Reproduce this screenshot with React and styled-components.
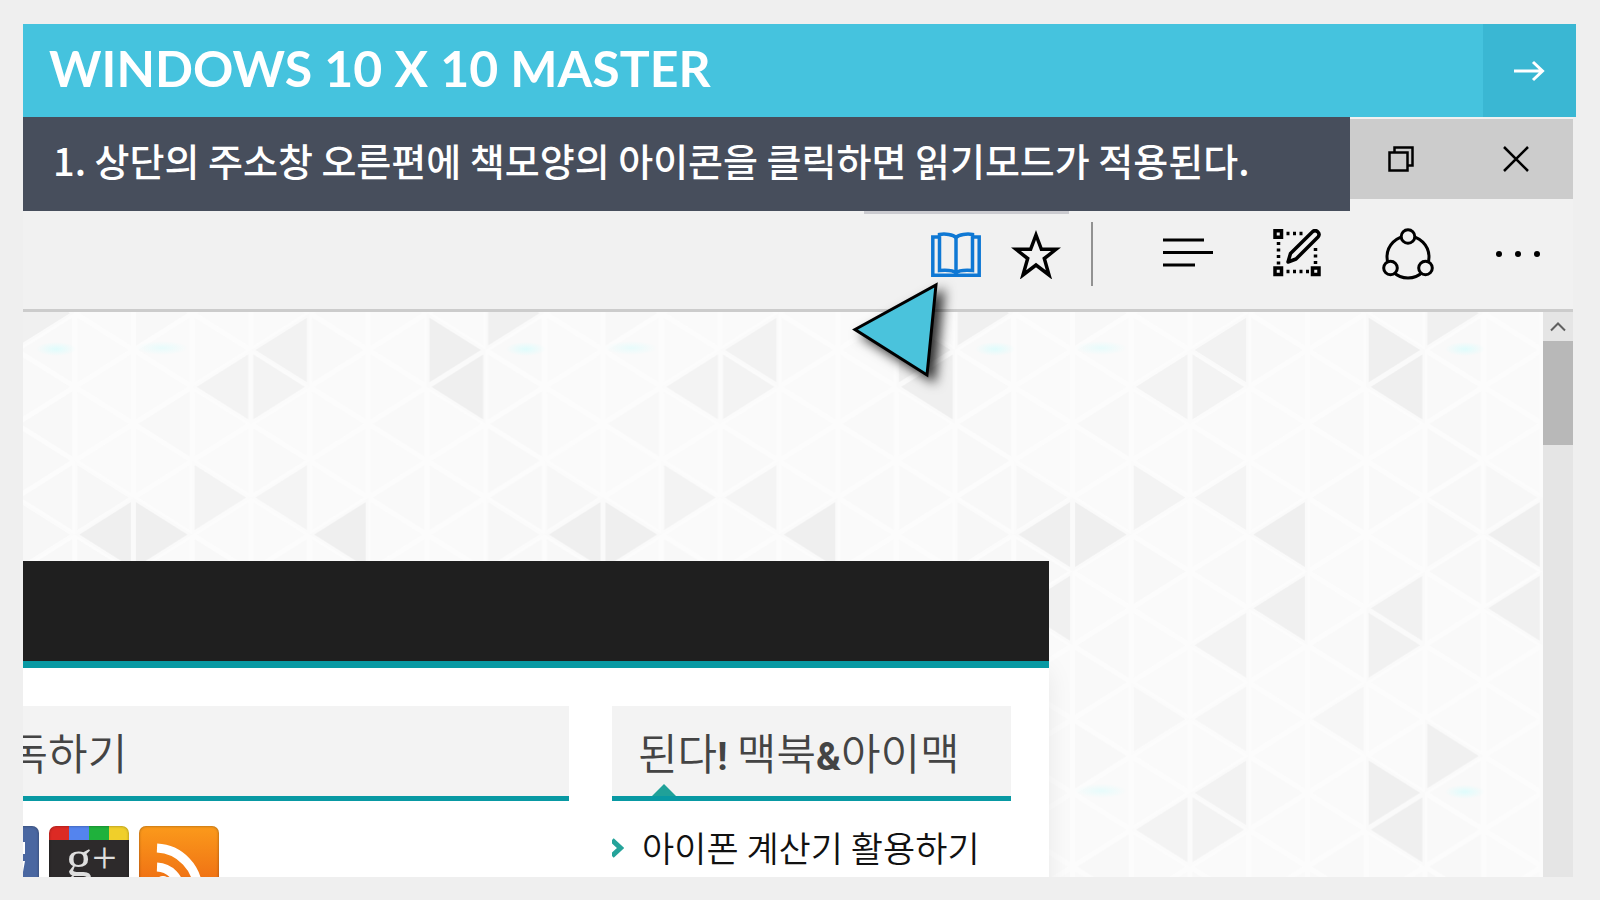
import React from "react";
import styled, { createGlobalStyle } from "styled-components";

const cyan = "#45c3de";
const cyanDark = "#3ab7d3";
const slate = "#474e5c";
const teal = "#0899a3";
const chrome = "#f1f1f1";
const silver = "#cccccc";
const black = "#000000";
const korean = `"Noto Sans CJK KR", sans-serif`;

// background tile: 8 strips wide, 12 half rows tall
const STRIP = 58.7;
const HALF = 36.9;
const TILE_W = STRIP * 8;
const TILE_H = HALF * 12;

// [strip, half row of the tip, direction of the tip, fill]
const shades = [
  [4, 0, "l", "#f2f2f2"],
  [3, 1, "l", "#f3f3f3"],
  [4, 1, "r", "#f3f3f3"],
  [7, 0, "r", "#efefef"],
  [7, 1, "l", "#efefef"],
  [0, 11, "r", "#f0f0f0"],
  [3, 4, "r", "#f3f3f3"],
  [4, 4, "l", "#f4f4f4"],
  [5, 5, "l", "#efefef"],
  [1, 5, "l", "#efefef"],
  [2, 5, "r", "#efefef"],
  [1, 7, "l", "#f0f0f0"],
  [5, 7, "l", "#f0f0f0"],
  [7, 7, "l", "#f1f1f1"],
  [7, 8, "r", "#f1f1f1"],
  [4, 8, "l", "#f3f3f3"],
  [3, 10, "r", "#f7f7f7"],
  [4, 10, "l", "#f6f6f6"],
  [6, 10, "l", "#f6f6f6"],
  [2, 11, "r", "#f8f8f8"],
  [0, 2, "l", "#f8f8f8"],
  [2, 2, "l", "#f8f8f8"],
  [0, 3, "r", "#f8f8f8"],
  [1, 4, "r", "#f7f7f7"],
  [6, 2, "l", "#f9f9f9"],
  [4, 3, "r", "#f9f9f9"],
  [6, 4, "l", "#f9f9f9"],
  [7, 4, "r", "#f9f9f9"],
  [0, 5, "r", "#f7f7f7"],
  [0, 4, "l", "#f8f8f8"],
  [3, 6, "r", "#f8f8f8"],
  [4, 6, "l", "#f9f9f9"],
  [0, 6, "l", "#f8f8f8"],
  [1, 6, "r", "#f8f8f8"],
  [6, 8, "l", "#f9f9f9"],
  [2, 8, "l", "#f9f9f9"],
  [0, 8, "l", "#f9f9f9"],
  [2, 9, "r", "#f9f9f9"],
  [5, 0, "r", "#f9f9f9"],
  [0, 0, "l", "#f9f9f9"],
  [0, 1, "r", "#f9f9f9"],
];

const trianglePoints = (strip, row, tip) => {
  const left = strip * STRIP;
  const right = left + STRIP;
  const y = row * HALF;
  const [tipX, baseX] = tip === "l" ? [left, right] : [right, left];
  return `${tipX},${y} ${baseX},${y - HALF} ${baseX},${y + HALF}`;
};

const gridLines = () => {
  const lines = [];
  for (let c = 0; c <= 8; c++) {
    lines.push(`M${c * STRIP} 0V${TILE_H}`);
  }
  for (let c = 0; c < 8; c++) {
    const x = c * STRIP;
    for (let r = -2; r <= 14; r += 2) {
      const y = (r + (c % 2)) * HALF;
      lines.push(`M${x} ${y}L${x + STRIP} ${y - HALF}`);
      lines.push(`M${x} ${y}L${x + STRIP} ${y + HALF}`);
    }
  }
  return lines.join("");
};

const Backdrop = () => (
  <BackdropSvg aria-hidden="true">
    <defs>
      <radialGradient id="glow">
        <stop offset="0" stopColor="#dffcfc" />
        <stop offset="1" stopColor="#dffcfc" stopOpacity="0" />
      </radialGradient>
      <pattern
        id="triangles"
        x="-7"
        y="38"
        width={TILE_W}
        height={TILE_H}
        patternUnits="userSpaceOnUse"
      >
        <rect width={TILE_W} height={TILE_H} fill="#fafafa" />
        {[0, -12, 12].map((shift) =>
          shades.map(([strip, row, tip, fill]) => (
            <polygon
              key={`${shift}-${strip}-${row}-${tip}`}
              points={trianglePoints(strip, row + shift, tip)}
              fill={fill}
            />
          ))
        )}
        <path d={gridLines()} stroke="#fdfdfd" strokeWidth="5" strokeOpacity="0.8" fill="none" />
        <ellipse cx="40" cy={TILE_H - 1} rx="20" ry="7" fill="url(#glow)" />
        <ellipse cx="40" cy="-1" rx="20" ry="7" fill="url(#glow)" />
        <ellipse cx="146" cy={TILE_H - 2} rx="26" ry="7" fill="url(#glow)" opacity="0.7" />
        <ellipse cx="146" cy="-2" rx="26" ry="7" fill="url(#glow)" opacity="0.7" />
      </pattern>
    </defs>
    <rect width="100%" height="100%" fill="url(#triangles)" />
  </BackdropSvg>
);

const ArrowIcon = () => (
  <svg width="32" height="24" viewBox="0 0 32 24" fill="none" stroke="#fff" strokeWidth="3">
    <path d="M0 12H28M19 3L28.500 12L19 21" />
  </svg>
);

const RestoreIcon = () => (
  <svg width="26" height="26" viewBox="0 0 26 26" fill="none" stroke={black} strokeWidth="2.500">
    <path d="M1.500 6.500H19.500V24.500H1.500ZM6.500 6V1.500H24.500V19.500H20" />
  </svg>
);

const CloseIcon = () => (
  <svg width="26" height="26" viewBox="0 0 26 26" fill="none" stroke={black} strokeWidth="2.500">
    <path d="M1 1L25 25M25 1L1 25" />
  </svg>
);

const BookIcon = () => (
  <svg width="50" height="46" viewBox="0 0 50 46" fill="none" stroke="#0f78d4" strokeWidth="3.500">
    <path d="M8 6H1.800V44.200H48.200V6H42" />
    <path d="M25 6.500C22 3.500 14 2.500 8.500 3.500V39.500C15 39 22 39 25 42C28 39 35 39 41.500 39.500V3.500C36 2.500 28 3.500 25 6.500Z" />
    <path d="M25 6V41" />
  </svg>
);

const StarIcon = () => (
  <svg width="50" height="50" viewBox="0 0 50 50" fill="none" stroke={black} strokeWidth="3.500">
    <path d="M25 6L30.400 20.300H45L33.300 29.500L38 46L25 36L12 46L16.700 29.500L5 20.300H19.600Z" />
  </svg>
);

const HubIcon = () => (
  <svg width="51" height="50" viewBox="0 0 51 50" fill="none" stroke={black} strokeWidth="3">
    <path d="M0 11H41M0 23.500H50M0 36H32" />
  </svg>
);

const NoteIcon = () => (
  <svg width="50" height="50" viewBox="0 0 50 50" fill="none" stroke={black} strokeWidth="3.500">
    <path d="M2 1.800H8.500V8.300H2ZM2 39H8.500V45.500H2ZM39.500 39H46V45.500H39.500Z" />
    <path
      d="M13.500 4.500H30M5.500 13V36M42.500 19V36M13.500 42.500H36"
      strokeDasharray="3 3.500"
    />
    <path d="M15 33L17.500 24.500L39.500 2.800C43 -0.500 48 4.500 45 8L23 30Z" strokeLinejoin="round" />
  </svg>
);

const ShareIcon = () => (
  <svg width="52" height="52" viewBox="0 0 52 52" fill="none" stroke={black} strokeWidth="3">
    <circle cx="26" cy="29" r="21" />
    <g fill={chrome}>
      <circle cx="26" cy="8.500" r="6.800" />
      <circle cx="8.500" cy="40" r="6.800" />
      <circle cx="43.500" cy="40" r="6.800" />
    </g>
  </svg>
);

const MoreIcon = () => (
  <svg width="46" height="8" viewBox="0 0 46 8" fill={black}>
    <circle cx="4" cy="4" r="3" />
    <circle cx="23" cy="4" r="3" />
    <circle cx="42" cy="4" r="3" />
  </svg>
);

const FacebookIcon = () => (
  <svg width="80" height="80" viewBox="0 0 80 80">
    <path
      d="M66 16H56C45 16 39 22 39 32V35H31V46H39V80H52V46H64L66 35H52V33C52 29 54 28 58 28H66Z"
      fill="#fff"
    />
  </svg>
);

const RssIcon = () => (
  <svg width="80" height="80" viewBox="0 0 80 80" fill="none" stroke="#fff" strokeWidth="9">
    <path d="M18 22A43 43 0 0 1 59 65M18 41A24 24 0 0 1 41 65" />
    <circle cx="24" cy="58" r="8" fill="#fff" stroke="none" />
  </svg>
);

const tools = [
  { label: "허브", icon: <HubIcon /> },
  { label: "웹 메모 작성", icon: <NoteIcon /> },
  { label: "공유", icon: <ShareIcon /> },
  { label: "기타 작업", icon: <MoreIcon /> },
];

const App = () => (
  <>
    <GlobalStyle />
    <Slide>
      <TitleBar>
        <Title>WINDOWS 10 X 10 MASTER</Title>
        <NextButton type="button" aria-label="다음">
          <ArrowIcon />
        </NextButton>
      </TitleBar>
      <Screen>
        <CaptionRow>
          <Caption>
            1. 상단의 주소창 오른편에 책모양의 아이콘을 클릭하면 읽기모드가 적용된다.
          </Caption>
          <WindowControls>
            <ToolButton type="button" $width={115} aria-label="이전 크기로 복원">
              <RestoreIcon />
            </ToolButton>
            <ToolButton type="button" $width={115} aria-label="닫기">
              <CloseIcon />
            </ToolButton>
          </WindowControls>
        </CaptionRow>
        <Toolbar>
          <ToolButton type="button" $width={80} aria-label="읽기용 보기">
            <BookIcon />
          </ToolButton>
          <ToolButton type="button" $width={80} aria-label="즐겨찾기">
            <StarIcon />
          </ToolButton>
          <Separator />
          {tools.map((tool) => (
            <ToolButton type="button" key={tool.label} $width={110} aria-label={tool.label}>
              {tool.icon}
            </ToolButton>
          ))}
          <Pointer width="110" height="120" viewBox="0 0 110 120" aria-hidden="true">
            <path
              d="M6 49.500L87 5L78 95Z"
              fill="#4ac3dc"
              stroke={black}
              strokeWidth="3"
            />
          </Pointer>
        </Toolbar>
        <Viewport>
          <Page>
            <Backdrop />
            <Site>
              <SiteNav />
              <Columns>
                <Subscribe>
                  <Heading $indent={10}>구독하기</Heading>
                  <SocialRow>
                    <SocialLink href="#facebook" $fill="#4a67a1" aria-label="Facebook">
                      <FacebookIcon />
                    </SocialLink>
                    <GoogleLink href="#google" $fill="#2d2a2b">
                      g<Plus>+</Plus>
                    </GoogleLink>
                    <SocialLink
                      href="#rss"
                      $fill="linear-gradient(#fb9a1b, #ef7014 70%)"
                      aria-label="RSS"
                    >
                      <RssIcon />
                    </SocialLink>
                  </SocialRow>
                </Subscribe>
                <Posts>
                  <Heading $indent={26} $notched>
                    된다<Latin>! </Latin>맥북<Latin>&amp;</Latin>아이맥
                  </Heading>
                  <PostList>
                    <PostItem>
                      <svg width="12" height="22" viewBox="0 0 12 22" aria-hidden="true">
                        <path d="M0 4L8.500 12L0 20" fill="none" stroke="#25a39a" strokeWidth="5" />
                      </svg>
                      <PostLink href="#post">아이폰 계산기 활용하기</PostLink>
                    </PostItem>
                  </PostList>
                </Posts>
              </Columns>
            </Site>
          </Page>
          <Scrollbar>
            <ScrollUp type="button" aria-label="위로 스크롤">
              <svg width="16" height="10" viewBox="0 0 16 10" fill="none">
                <path d="M1 8.500L8 1.500L15 8.500" stroke="#606060" strokeWidth="2" />
              </svg>
            </ScrollUp>
            <ScrollThumb />
          </Scrollbar>
        </Viewport>
      </Screen>
    </Slide>
  </>
);

export default App;

const GlobalStyle = createGlobalStyle`
  * {
    box-sizing: border-box;
  }

  body {
    margin: 0;
    background: #efefef;
    font-family: ${korean};
  }

  button {
    padding: 0;
    border: 0;
    background: none;
    cursor: pointer;
  }

  svg {
    display: block;
    flex: none;
  }
`;

const Slide = styled.main`
  display: flex;
  flex-direction: column;
  height: 100vh;
  padding: 24px 24px 23px 23px;
`;

const TitleBar = styled.header`
  display: flex;
  align-items: center;
  flex: none;
  height: 93px;
  background: ${cyan};
`;

const Title = styled.h1`
  flex: 1;
  margin: 0;
  padding: 0 0 5px 26px;
  color: #fff;
  font-family: Lato, sans-serif;
  font-size: 50px;
  font-weight: 700;
  line-height: 60px;
  white-space: nowrap;
`;

const NextButton = styled.button`
  display: flex;
  align-items: center;
  justify-content: center;
  width: 93px;
  height: 100%;
  background: ${cyanDark};
`;

const Screen = styled.section`
  display: flex;
  flex-direction: column;
  flex: 1;
  min-height: 0;
  margin-right: 3px;
  background: ${chrome};
`;

const CaptionRow = styled.div`
  display: flex;
  flex: none;
  height: 94px;
`;

const Caption = styled.p`
  flex: 1;
  margin: 0;
  padding: 13px 0 0 30px;
  background: ${slate};
  color: #fff;
  font-size: 38px;
  font-weight: 500;
  line-height: 60px;
  white-space: nowrap;
`;

const WindowControls = styled.div`
  display: flex;
  justify-content: flex-end;
  width: 223px;
  height: 80px;
  margin-top: 2px;
  overflow: hidden;
  background: ${silver};
`;

const ToolButton = styled.button`
  display: flex;
  align-items: center;
  justify-content: center;
  flex: none;
  width: ${({ $width }) => $width}px;
`;

const Toolbar = styled.div`
  position: relative;
  z-index: 1;
  display: flex;
  justify-content: flex-end;
  flex: none;
  height: 101px;
  padding-bottom: 12px;
  border-bottom: 3px solid ${silver};

  &::before {
    content: "";
    position: absolute;
    top: 0;
    right: 504px;
    width: 205px;
    height: 3px;
    background: #cbcbd0;
  }
`;

const Separator = styled.div`
  width: 2px;
  height: 64px;
  margin: 11px 40px 0 15px;
  background: #929292;
`;

const Pointer = styled.svg`
  position: absolute;
  top: 69px;
  right: 614px;
  filter: drop-shadow(7px 6px 6px rgba(0, 0, 0, 0.8));
`;

const Viewport = styled.div`
  display: flex;
  flex: 1;
  min-height: 0;
`;

const Page = styled.div`
  position: relative;
  flex: 1;
  min-width: 0;
  overflow: hidden;
`;

const BackdropSvg = styled.svg`
  position: absolute;
  inset: 0;
  width: 100%;
  height: 100%;
`;

const Site = styled.div`
  position: relative;
  height: 100%;
  margin: 249px 494px 0 0;
  overflow: hidden;
  background: #fff;
  box-shadow: 0 110px 24px rgba(0, 0, 0, 0.08);
`;

const SiteNav = styled.nav`
  height: 107px;
  border-bottom: 7px solid ${teal};
  background: #1f1f1f;
`;

const Columns = styled.div`
  display: flex;
  gap: 43px;
  padding: 38px 38px 0 0;
`;

const Subscribe = styled.section`
  flex: 1;
  margin-left: -64px;
`;

const Posts = styled.section`
  width: 399px;
`;

const Heading = styled.h2`
  position: relative;
  height: 95px;
  margin: 0;
  padding-left: ${({ $indent }) => $indent}px;
  border-bottom: 5px solid ${teal};
  background: #f3f3f3;
  color: #444;
  font-size: 43px;
  font-weight: 350;
  line-height: 90px;
  white-space: nowrap;

  &::after {
    content: "";
    display: ${({ $notched }) => ($notched ? "block" : "none")};
    position: absolute;
    bottom: 0;
    left: 40px;
    border: 12px solid transparent;
    border-top-width: 0;
    border-bottom-color: #1fa199;
  }
`;

const Latin = styled.span`
  font-family: Roboto, sans-serif;
  font-size: 38px;
  font-weight: 700;
`;

const SocialRow = styled.div`
  display: flex;
  gap: 10px;
  margin-top: 25px;
`;

const SocialLink = styled.a`
  width: 80px;
  height: 80px;
  border-radius: 7px;
  overflow: hidden;
  background: ${({ $fill }) => $fill};
  box-shadow: inset 0 0 3px rgba(0, 0, 0, 0.4);
  text-decoration: none;
`;

const GoogleLink = styled(SocialLink)`
  display: flex;
  padding-left: 17px;
  background: linear-gradient(
        90deg,
        #dc2a24 25%,
        #5484ee 25% 50%,
        #1fb13c 50% 75%,
        #f0cf2a 75%
      )
      0 0 / 100% 14px no-repeat,
    ${({ $fill }) => $fill};
  color: #dedede;
  font-family: "Liberation Serif", serif;
  font-size: 52px;
  line-height: 66px;
`;

const Plus = styled.span`
  font-size: 44px;
`;

const PostList = styled.ul`
  margin: 0;
  padding: 24px 0 0;
  list-style: none;
`;

const PostItem = styled.li`
  display: flex;
  align-items: center;
  gap: 18px;
  height: 44px;
`;

const PostLink = styled.a`
  color: #111;
  font-size: 35px;
  font-weight: 350;
  line-height: 44px;
  text-decoration: none;
  white-space: nowrap;
`;

const Scrollbar = styled.div`
  width: 30px;
  background: #e5e5e5;
`;

const ScrollUp = styled.button`
  display: flex;
  align-items: center;
  justify-content: center;
  width: 100%;
  height: 29px;
`;

const ScrollThumb = styled.div`
  height: 104px;
  background: #b8b8b8;
`;
